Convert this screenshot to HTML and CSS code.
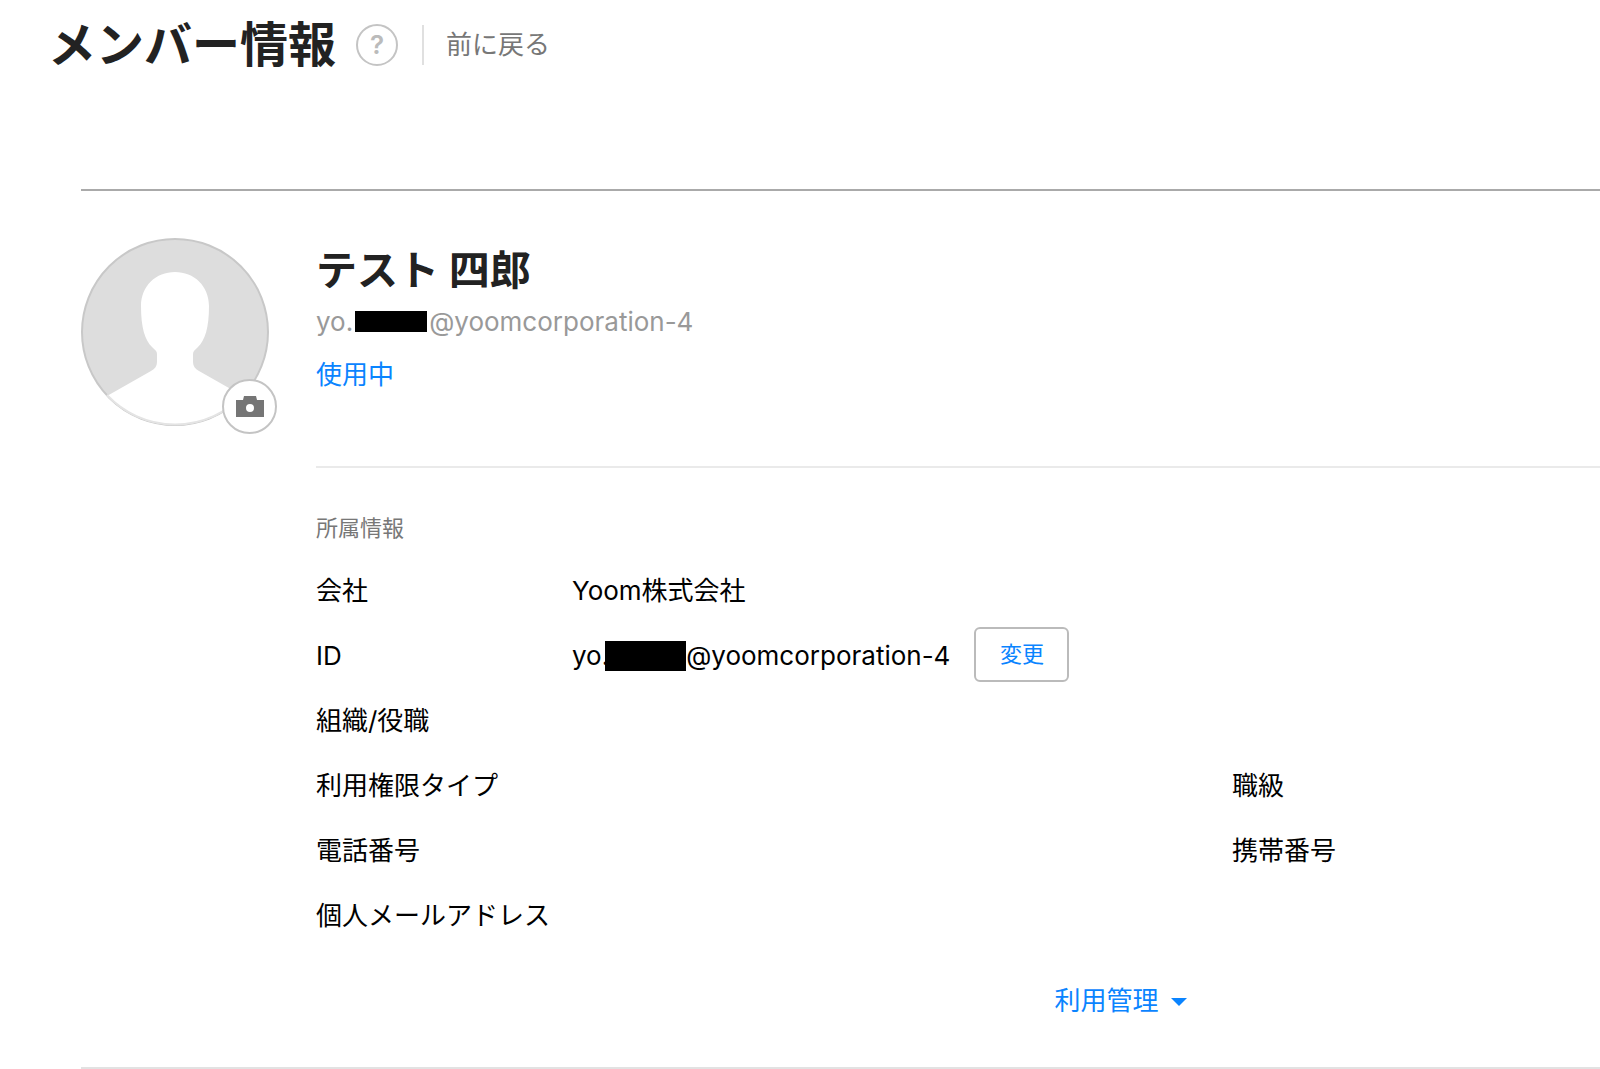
FILE: index.html
```html
<!DOCTYPE html>
<html lang="ja">
<head>
    <meta charset="UTF-8">
    <title>メンバー情報</title>
    <link rel="stylesheet" href="styles.css">
</head>
<body>
    <header class="page-header">
        <h1>メンバー情報</h1>
        <button class="help" type="button">?</button>
        <a class="back" href="#">前に戻る</a>
    </header>

    <main class="member">
        <div class="photo">
            <svg class="avatar" viewBox="0 0 188 188">
                <defs>
                    <clipPath id="round"><circle cx="94" cy="94" r="93"/></clipPath>
                </defs>
                <circle cx="94" cy="94" r="93" fill="#ddd"/>
                <circle cx="94" cy="94" r="93" fill="none" stroke="#c8c8c8" stroke-width="2"/>
                <path clip-path="url(#round)" fill="#fff" d="M94 34C113 34 128 48 128 68C128 90 124 102 117 109C114 112 112 113 112 116V124C112 128 114 131 118 133L162 158L188 188H0L26 158L70 133C74 131 76 128 76 124V116C76 113 74 112 71 109C64 102 60 90 60 68C60 48 75 34 94 34Z"/>
                <path fill="none" stroke="#e4e4e4" stroke-width="2" d="M26 157A93 93 0 0 0 162 157"/>
            </svg>
            <button class="camera" type="button" aria-label="写真を変更">
                <svg width="28" height="22" viewBox="0 0 28 22">
                    <path fill="#757575" fill-rule="evenodd" d="M0 4H7L8 0H20L21 4H28V21H0ZM14 8A4 4 0 0 0 14 16A4 4 0 0 0 14 8Z"/>
                </svg>
            </button>
        </div>

        <div class="info">
            <section class="profile">
                <h2>テスト 四郎</h2>
                <p class="mail">yo.<span class="mask"></span>@yoomcorporation-4</p>
                <p class="status">使用中</p>
            </section>

            <section class="belong">
                <h3>所属情報</h3>
                <dl class="row">
                    <dt>会社</dt>
                    <dd>Yoom株式会社</dd>
                </dl>
                <dl class="row">
                    <dt>ID</dt>
                    <dd>yo.<span class="mask mask-id"></span>@yoomcorporation-4 <button class="change" type="button">変更</button></dd>
                </dl>
                <dl class="row">
                    <dt>組織/役職</dt>
                    <dd></dd>
                </dl>
                <dl class="row">
                    <dt>利用権限タイプ</dt>
                    <dd></dd>
                    <dt>職級</dt>
                </dl>
                <dl class="row">
                    <dt>電話番号</dt>
                    <dd></dd>
                    <dt>携帯番号</dt>
                </dl>
                <dl class="row">
                    <dt>個人メールアドレス</dt>
                    <dd></dd>
                </dl>
            </section>
        </div>

        <div class="manage">
            <button class="manage-btn" type="button">利用管理 <span class="arrow"></span></button>
        </div>
    </main>
</body>
</html>
```
FILE: styles.css
```css
*{
    box-sizing: border-box;
}

body{
    margin: 0;
    background-color: #fff;
    color: #000;
    font-family: Inter, "Noto Sans CJK JP", sans-serif;
    font-size: 26px;
    line-height: 40px;
}

h1, h2, h3, p, dl, dd{
    margin: 0;
}

button{
    padding: 0;
    background-color: #fff;
    font-family: inherit;
    cursor: pointer;
}

.page-header{
    display: flex;
    align-items: center;
    height: 89px;
    padding-left: 48px;
}

.page-header h1{
    color: #222;
    font-size: 48px;
    line-height: 72px;
}

.help{
    width: 42px;
    height: 42px;
    margin: 0 24px 0 20px;
    border: 2px solid #c4c4c4;
    border-radius: 50%;
    color: #bbb;
    font-size: 26px;
    font-weight: 600;
    line-height: 38px;
}

.back{
    padding-left: 22px;
    border-left: 2px solid #e0e0e0;
    color: #777;
    text-decoration: none;
}

.member{
    display: grid;
    grid-template-columns: 235px 1fr;
    margin: 100px 0 0 81px;
    padding-top: 47px;
    border-top: 2px solid #aaa;
    border-bottom: 2px solid #e2e2e2;
}

.photo{
    position: relative;
    width: 188px;
    height: 188px;
}

.avatar{
    display: block;
    width: 188px;
    height: 188px;
}

.camera{
    position: absolute;
    right: -8px;
    bottom: -8px;
    display: flex;
    align-items: center;
    justify-content: center;
    width: 55px;
    height: 55px;
    border: 2px solid #c4c4c4;
    border-radius: 50%;
}

.profile{
    height: 230px;
    border-bottom: 2px solid #eaeaea;
}

.profile h2{
    color: #222;
    font-size: 41px;
    line-height: 64px;
}

.mail{
    color: #999;
}

.status{
    margin-top: 13px;
    color: #0a84ff;
}

.mask{
    display: inline-block;
    width: 72px;
    height: 21px;
    margin: 0 2px;
    background-color: #000;
    vertical-align: -1px;
}

/* covers part of the dot before it */
.mask-id{
    width: 81px;
    height: 30px;
    margin: 0 0 0 -4px;
}

.belong{
    padding-top: 40px;
}

.belong h3{
    margin-bottom: 10px;
    color: #777;
    font-size: 22px;
    font-weight: normal;
}

.row{
    display: grid;
    grid-template-columns: 256px 1fr 368px;
    align-items: center;
    height: 65px;
}

.row dd{
    display: flex;
    align-items: center;
}

.change{
    width: 95px;
    height: 55px;
    margin: 0 0 3px 24px;
    padding-bottom: 4px;
    border: 2px solid #bbb;
    border-radius: 6px;
    color: #0a84ff;
    font-size: 22px;
}

.manage{
    grid-column: 1 / -1;
    display: flex;
    justify-content: center;
    padding: 33px 0 46px 560px;
}

.manage-btn{
    display: flex;
    align-items: center;
    gap: 12px;
    border: 0;
    color: #0a84ff;
    font-size: 26px;
    line-height: 40px;
}

.arrow{
    margin-top: 2px;
    border: 8px solid transparent;
    border-top-color: #0a84ff;
    border-bottom: 0;
}
```
